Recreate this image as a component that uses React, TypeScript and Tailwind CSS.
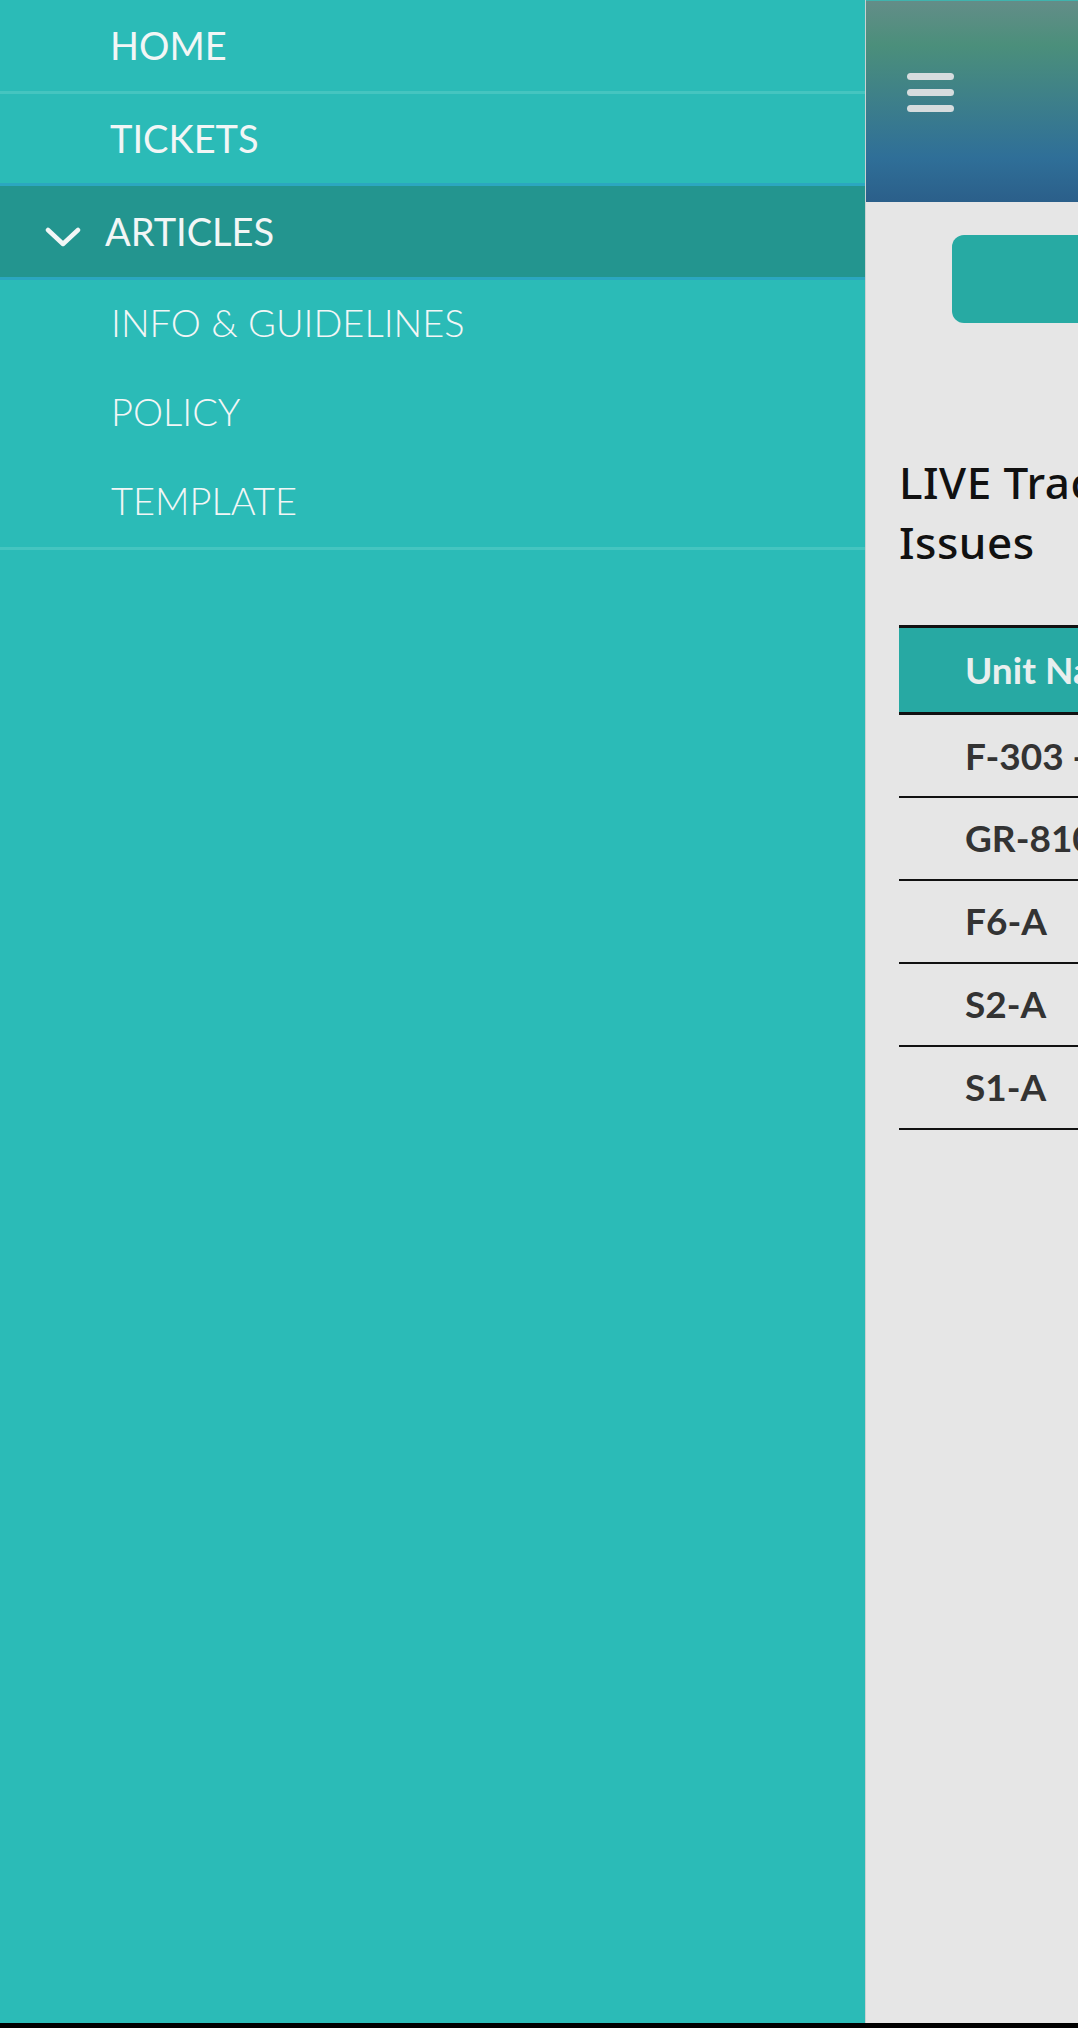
import React from 'react'

// Side drawer menu entries
const topItems = ['HOME', 'TICKETS']
const subItems = ['INFO & GUIDELINES', 'POLICY', 'TEMPLATE']
const units = ['F-303 - A', 'GR-810-A', 'F6-A', 'S2-A', 'S1-A']

const lato = { fontFamily: 'Lato, "Liberation Sans", sans-serif' }

const Chevron = () => (
  <svg width="36" height="22" viewBox="0 0 36 22" fill="none" className="mt-[10px] shrink-0">
    <polyline points="3,4 18,18 33,4" stroke="#f2f6f6" strokeWidth="4.5" strokeLinecap="round" strokeLinejoin="round" />
  </svg>
)

const Sidebar = () => (
  <aside className="w-[865px] shrink-0 h-full bg-[#2bbbb7] text-[#f2f6f6] text-[38px]" style={lato}>
    <div className="h-[94px] pl-[110px] flex items-center border-b-[3px] border-[#45c5c0]">
      {topItems[0]}
    </div>
    <div className="h-[89px] pl-[110px] flex items-center">{topItems[1]}</div>
    <div className="h-[97px] bg-[#23958f] border-y-[3px] border-[#2ba7c0] pl-[45px] flex items-center">
      <Chevron />
      <span className="ml-[24px]">ARTICLES</span>
    </div>
    <div className="border-b-[3px] border-[#45c5c0]">
      {subItems.map((s) => (
        <div key={s} className="h-[89px] pl-[111px] pb-[5px] flex items-center font-light">
          {s}
        </div>
      ))}
    </div>
  </aside>
)

const Main = () => (
  <main className="flex-1 min-w-0 h-full overflow-hidden bg-[#e6e6e6] border-l border-[#c8d2d2]">
    <div className="w-[1078px]">
      <header className="h-[202px] border-t border-[#3fb4ae] bg-[linear-gradient(180deg,#638d88_0%,#4b8f7b_22%,#3d7f8a_50%,#2f6f98_78%,#2b5f8a_100%)] pl-[41px] pt-[72px]">
        <div className="w-[47px] flex flex-col gap-[9px]">
          <span className="h-[7px] rounded-full bg-[#d6dcde]" />
          <span className="h-[7px] rounded-full bg-[#d6dcde]" />
          <span className="h-[7px] rounded-full bg-[#d6dcde]" />
        </div>
      </header>
      <div className="pl-[33px]">
        <div className="ml-[53px] mt-[33px] h-[88px] w-[900px] rounded-[12px] bg-[#27aaa3]" />
        <h1
          className="mt-[129px] text-[44px] leading-[60px] text-[#111] tracking-[0.5px] font-medium"
          style={{ fontFamily: '"Noto Sans", "Open Sans", sans-serif' }}
        >
          LIVE Tracking
          <br />
          Issues
        </h1>
        <table className="mt-[53px] w-[1000px] border-collapse text-[37px] font-bold" style={lato}>
          <thead>
            <tr className="border-y-[3px] border-[#111] bg-[#27a9a3] text-[#e9efee]">
              <th className="h-[87px] pl-[66px] text-left font-bold">Unit Name</th>
            </tr>
          </thead>
          <tbody>
            {units.map((u) => (
              <tr key={u} className="border-b-2 border-[#111] text-[#333]">
                <td className="h-[83px] pl-[66px]">{u}</td>
              </tr>
            ))}
          </tbody>
        </table>
      </div>
    </div>
  </main>
)

export default function App() {
  return (
    <div className="w-full h-[2028px] bg-black overflow-hidden">
      <div className="h-[2023px] flex">
        <Sidebar />
        <Main />
      </div>
    </div>
  )
}
